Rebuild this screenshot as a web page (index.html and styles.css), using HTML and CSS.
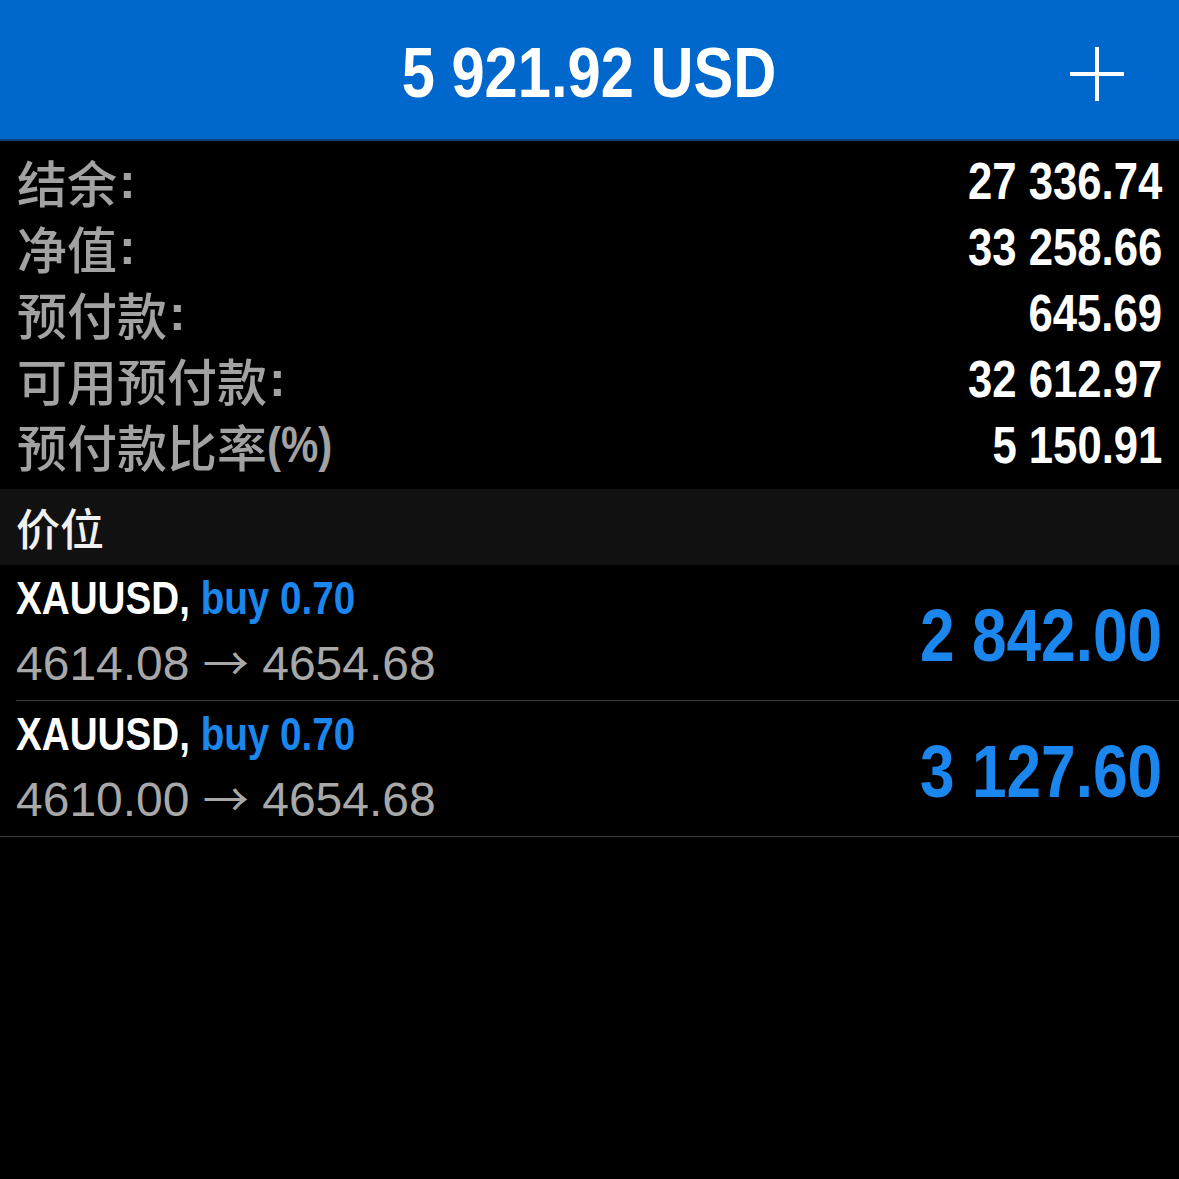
FILE: index.html
```html
<!DOCTYPE html>
<html lang="zh-CN">
<head>
  <meta charset="UTF-8">
  <meta name="viewport" content="width=device-width, initial-scale=1.0">
  <title>交易</title>
  <link rel="stylesheet" href="styles.css">
</head>
<body>
  <header class="top-bar">
    <div class="top-title narrow">5 921.92 USD</div>
    <div class="top-add">
      <svg width="54" height="54" viewBox="0 0 54 54">
        <path d="M27 0V54M0 27H54" stroke="#fff" stroke-width="4" fill="none"/>
      </svg>
    </div>
  </header>

  <section class="summary">
    <div class="summary-row"><span class="label">结余<span class="colon">:</span></span><span class="value narrow">27 336.74</span></div>
    <div class="summary-row"><span class="label">净值<span class="colon">:</span></span><span class="value narrow">33 258.66</span></div>
    <div class="summary-row"><span class="label">预付款<span class="colon">:</span></span><span class="value narrow">645.69</span></div>
    <div class="summary-row"><span class="label">可用预付款<span class="colon">:</span></span><span class="value narrow">32 612.97</span></div>
    <div class="summary-row"><span class="label">预付款比率<span class="paren narrow">(%)</span></span><span class="value narrow">5 150.91</span></div>
  </section>

  <div class="section-head">价位</div>

  <div class="positions">
    <div class="position">
      <div class="pos-info">
        <div class="pos-title narrow">XAUUSD, <span class="pos-type">buy 0.70</span></div>
        <div class="pos-prices">4614.08 <span class="arrow">→</span> 4654.68</div>
      </div>
      <div class="pos-profit narrow">2 842.00</div>
    </div>
    <div class="position last">
      <div class="pos-info">
        <div class="pos-title narrow">XAUUSD, <span class="pos-type">buy 0.70</span></div>
        <div class="pos-prices">4610.00 <span class="arrow">→</span> 4654.68</div>
      </div>
      <div class="pos-profit narrow">3 127.60</div>
    </div>
  </div>
</body>
</html>
```

FILE: styles.css
```css
body {
  margin: 0;
  padding: 0;
  background: #000;
  color: #fff;
  font-family: "Liberation Sans", "Noto Sans CJK SC", sans-serif;
  width: 1179px;
  height: 1179px;
  overflow: hidden;
}

/* condensed bold look: no narrow face installed, so squeeze Liberation Sans */
.narrow {
  display: inline-block;
  font-family: "Liberation Sans", sans-serif;
  font-weight: bold;
  white-space: nowrap;
  transform: scaleX(0.84);
}

.top-bar {
  height: 139px;
  background: #0068cc;
  border-bottom: 2px solid #0d3f7a;
  display: flex;
  align-items: center;
  justify-content: center;
  position: relative;
}

.top-title {
  font-size: 71px;
  color: #fff;
  padding-top: 6px;
}

.top-add {
  position: absolute;
  right: 55px;
  top: 47px;
  width: 54px;
  height: 54px;
}

.summary {
  padding: 7px 17px 11px 17px;
}

.summary-row {
  display: flex;
  justify-content: space-between;
  align-items: center;
  height: 66px;
}

.label {
  font-family: "Noto Sans CJK SC", sans-serif;
  font-weight: 500;
  font-size: 50px;
  color: #a2a2a2;
  display: flex;
  align-items: center;
}

.colon {
  font-family: "Liberation Sans", sans-serif;
  font-weight: bold;
  margin-left: 2px;
}

.paren {
  font-size: 50px;
  transform-origin: left center;
  color: #a2a2a2;
}

.value {
  font-size: 52px;
  color: #fff;
  transform-origin: right center;
}

.section-head {
  background: #111;
  height: 76px;
  display: flex;
  align-items: center;
  padding-left: 16px;
  font-family: "Noto Sans CJK SC", sans-serif;
  font-weight: 500;
  font-size: 44px;
  color: #f0f0f0;
}

.position {
  display: flex;
  justify-content: space-between;
  align-items: center;
  height: 135px;
  margin-left: 16px;
  padding-right: 17px;
  border-bottom: 1px solid #3a3a3a;
}

.position.last {
  margin-left: 0;
  padding-left: 16px;
}

.pos-title {
  font-size: 46px;
  color: #fff;
  line-height: 58px;
  transform-origin: left center;
}

.pos-type {
  color: #1a86ee;
}

.pos-prices {
  font-size: 48px;
  color: #a8a8a8;
  line-height: 66px;
}

.arrow {
  font-family: "Noto Sans CJK SC", sans-serif;
  font-size: 46px;
}

.pos-profit {
  font-size: 74px;
  color: #1a86ee;
  transform-origin: right center;
  margin-top: 6px;
}
```
